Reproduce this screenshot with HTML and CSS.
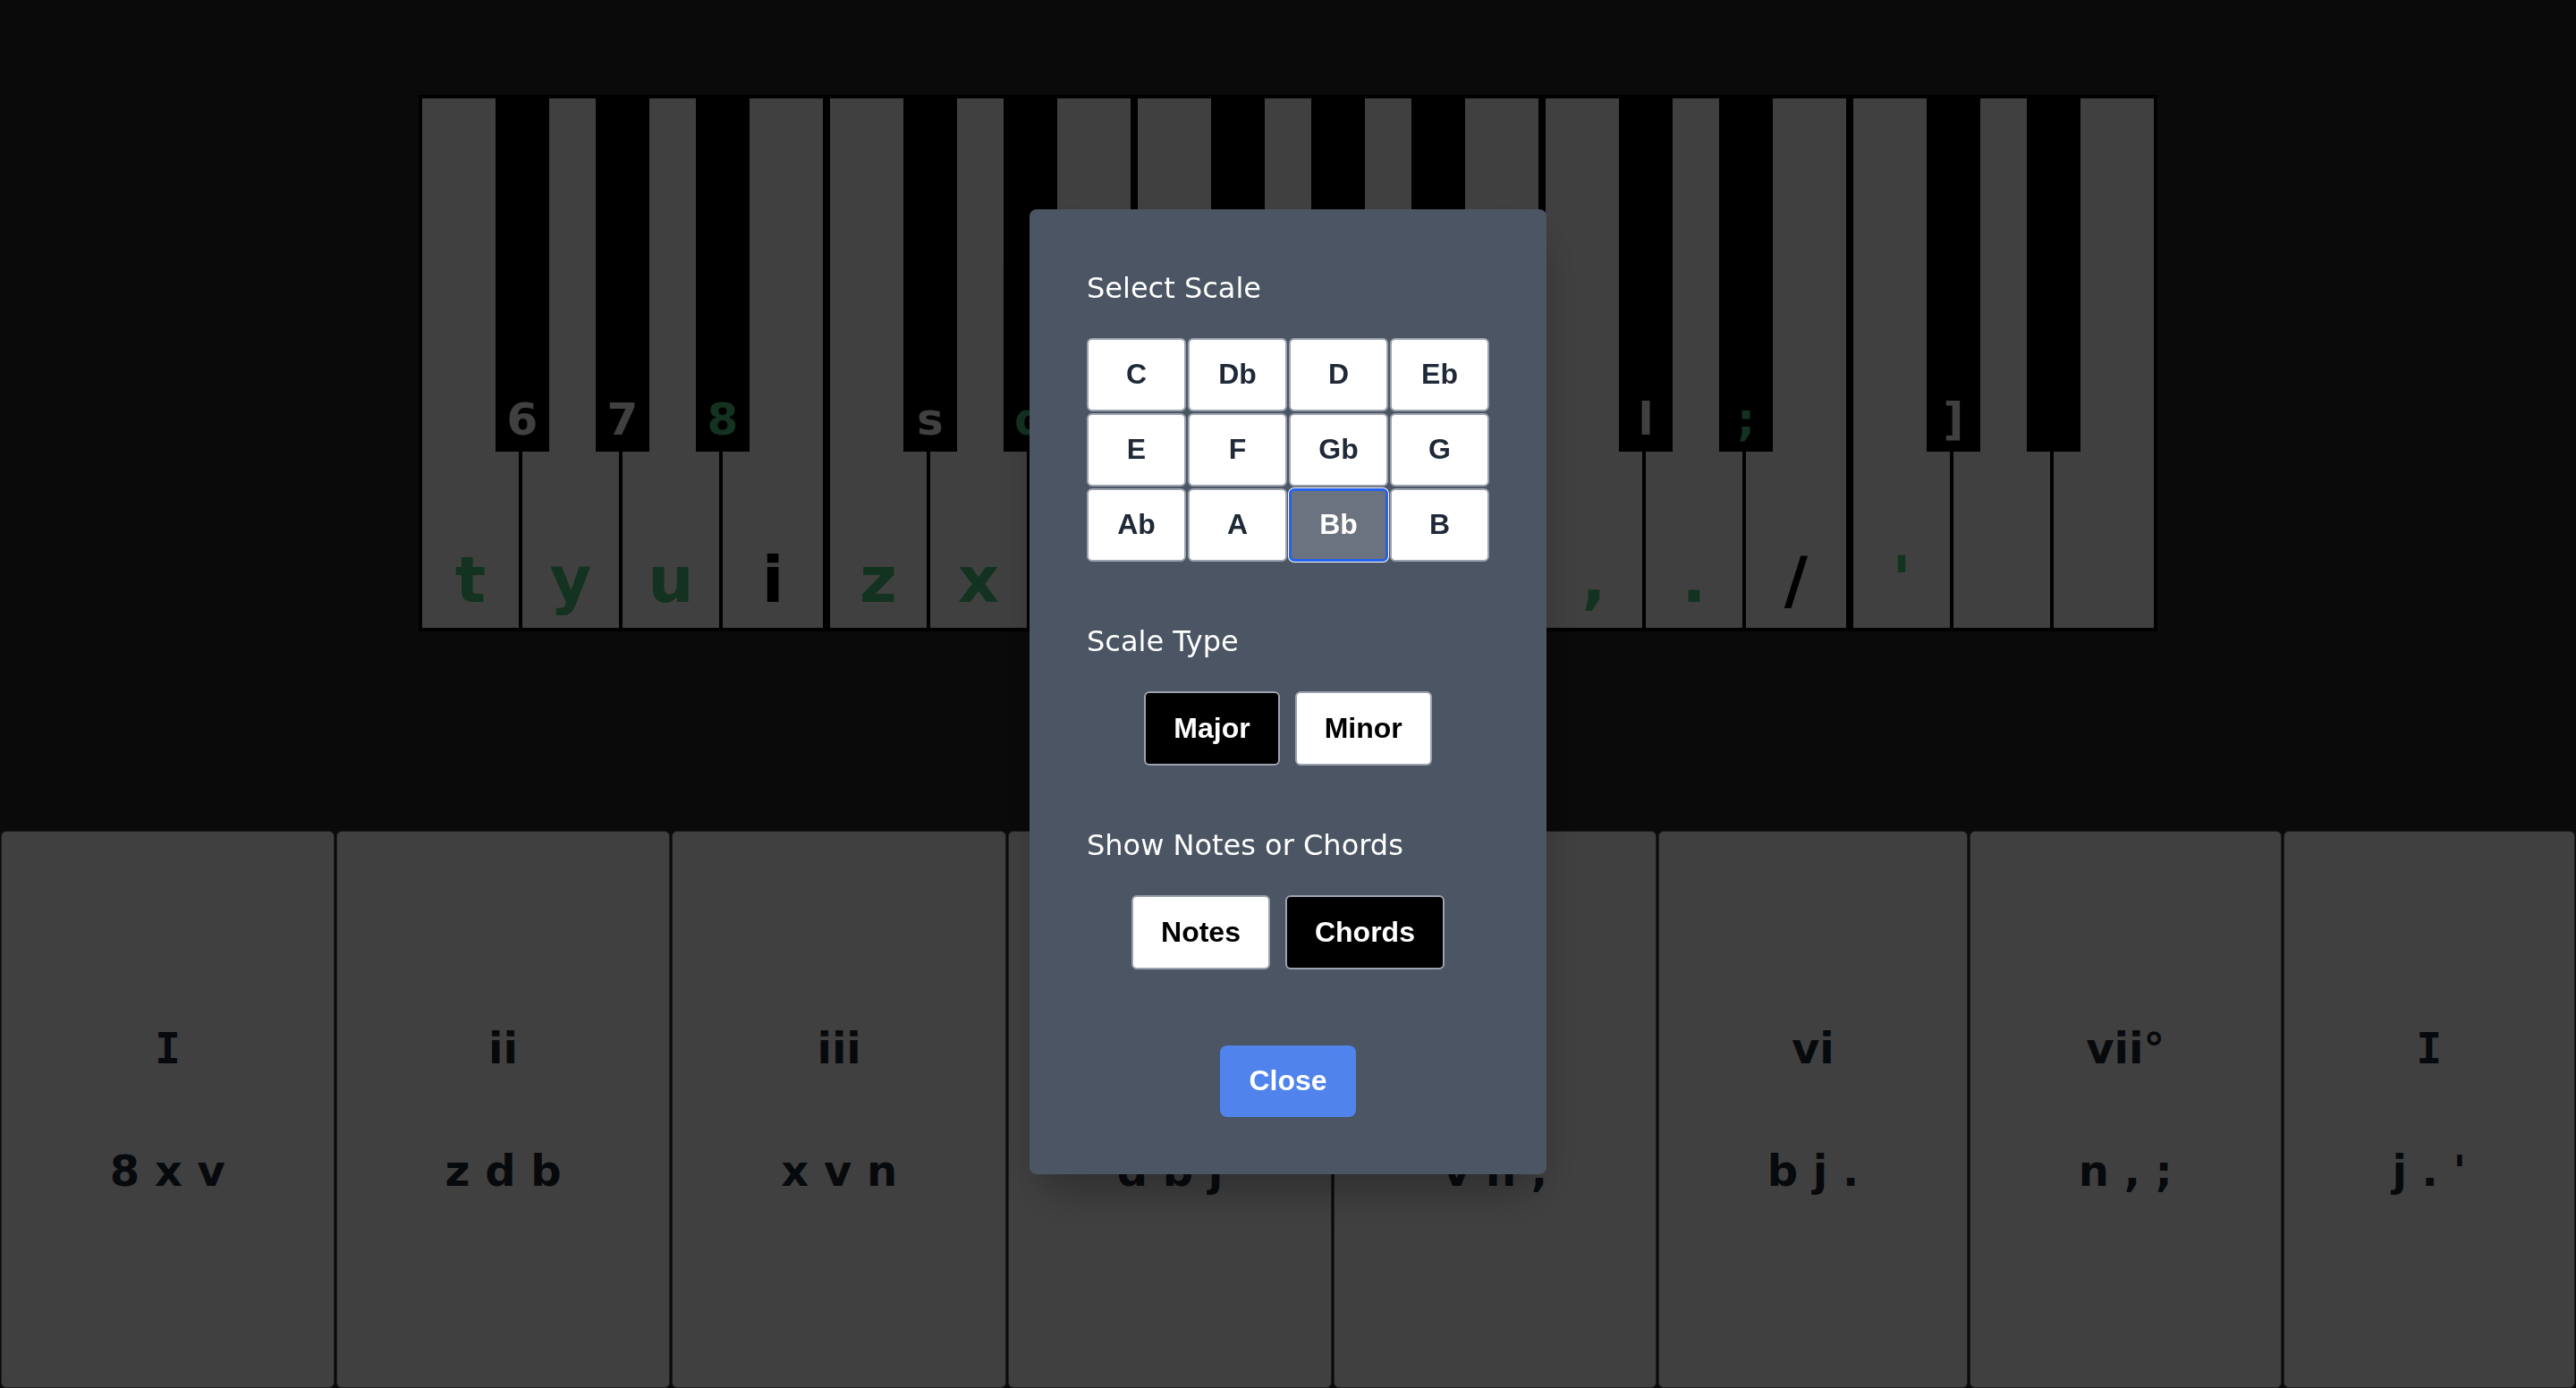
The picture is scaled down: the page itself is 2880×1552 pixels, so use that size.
FILE: index.html
```html
<!DOCTYPE html>
<html lang="en">
<head>
<meta charset="utf-8">
<title>Piano Chords</title>
<link rel="stylesheet" href="styles.css">
</head>
<body>
<div class="app">
  <div class="stage">
    <div class="piano">
      <div class="part">
        <div class="bkey p1"><span class="lbl w">6</span></div>
        <div class="bkey p2"><span class="lbl w">7</span></div>
        <div class="bkey p3"><span class="lbl g">8</span></div>
        <div class="wkey"><span class="lbl g">t</span></div>
        <div class="wkey"><span class="lbl g">y</span></div>
        <div class="wkey"><span class="lbl g">u</span></div>
        <div class="wkey"><span class="lbl k">i</span></div>
      </div>
      <div class="part">
        <div class="bkey p1"><span class="lbl w">s</span></div>
        <div class="bkey p2"><span class="lbl g">d</span></div>
        <div class="wkey"><span class="lbl g">z</span></div>
        <div class="wkey"><span class="lbl g">x</span></div>
        <div class="wkey"><span class="lbl k">c</span></div>
      </div>
      <div class="part">
        <div class="bkey p1"></div>
        <div class="bkey p2"></div>
        <div class="bkey p3"></div>
        <div class="wkey"><span class="lbl g">v</span></div>
        <div class="wkey"><span class="lbl g">b</span></div>
        <div class="wkey"><span class="lbl g">n</span></div>
        <div class="wkey"><span class="lbl k">m</span></div>
      </div>
      <div class="part">
        <div class="bkey p1"><span class="lbl w">l</span></div>
        <div class="bkey p2"><span class="lbl g">;</span></div>
        <div class="wkey"><span class="lbl g">,</span></div>
        <div class="wkey"><span class="lbl g">.</span></div>
        <div class="wkey"><span class="lbl k">/</span></div>
      </div>
      <div class="part">
        <div class="bkey p1"><span class="lbl w">]</span></div>
        <div class="bkey p2"></div>
        <div class="wkey"><span class="lbl g">'</span></div>
        <div class="wkey"></div>
        <div class="wkey"></div>
      </div>
    </div>
  </div>
  <div class="chords">
    <div class="chord"><div class="roman">I</div><div>8 x v</div></div>
    <div class="chord"><div>ii</div><div>z d b</div></div>
    <div class="chord"><div>iii</div><div>x v n</div></div>
    <div class="chord"><div>IV</div><div>d b j</div></div>
    <div class="chord"><div>V</div><div>v n ,</div></div>
    <div class="chord"><div>vi</div><div>b j .</div></div>
    <div class="chord"><div>vii°</div><div>n , ;</div></div>
    <div class="chord"><div class="roman">I</div><div>j . '</div></div>
  </div>
</div>

<div class="backdrop">
  <div class="modal">
    <div class="section">
      <h2 class="title">Select Scale</h2>
      <div class="grid">
        <button class="note">C</button>
        <button class="note">Db</button>
        <button class="note">D</button>
        <button class="note">Eb</button>
        <button class="note">E</button>
        <button class="note">F</button>
        <button class="note">Gb</button>
        <button class="note">G</button>
        <button class="note">Ab</button>
        <button class="note">A</button>
        <button class="note sel">Bb</button>
        <button class="note">B</button>
      </div>
    </div>
    <div class="section">
      <h2 class="title">Scale Type</h2>
      <div class="row">
        <button class="opt on">Major</button>
        <button class="opt">Minor</button>
      </div>
    </div>
    <div class="section">
      <h2 class="title">Show Notes or Chords</h2>
      <div class="row">
        <button class="opt">Notes</button>
        <button class="opt on">Chords</button>
      </div>
    </div>
    <div class="actions">
      <button class="close">Close</button>
    </div>
  </div>
</div>
</body>
</html>
```

FILE: styles.css
```css
html, body {
  margin: 0;
  height: 100%;
  overflow: hidden;
}

body {
  background: #282828;
  font-family: "DejaVu Sans", sans-serif;
}

.app {
  height: 100vh;
  display: flex;
  flex-direction: column;
}

.stage {
  height: 929px;
  flex: none;
  box-sizing: border-box;
  padding-top: 106px;
  display: flex;
  justify-content: center;
  align-items: flex-start;
}

.piano {
  display: flex;
  gap: 8px;
  padding: 4px;
  background: #000;
}

.part {
  position: relative;
  display: flex;
  height: 592px;
}

.wkey {
  box-sizing: border-box;
  width: 112px;
  height: 100%;
  background: #fff;
  border-right: 4px solid #000;
  display: flex;
  align-items: flex-end;
  justify-content: center;
  padding-bottom: 12px;
}

.wkey:last-child {
  border-right: 0;
}

.wkey .lbl {
  font: bold 72px "DejaVu Sans", sans-serif;
}

.bkey {
  position: absolute;
  top: 0;
  width: 60px;
  height: 395px;
  box-sizing: border-box;
  background: #000;
  display: flex;
  align-items: flex-end;
  justify-content: center;
  padding-bottom: 7px;
  z-index: 1;
}

.bkey .lbl {
  font: bold 50px "DejaVu Sans", sans-serif;
}

.p1 { left: 82px; }
.p2 { left: 194px; }
.p3 { left: 306px; }

.g { color: #50c880; }
.k { color: #000; }
.w { color: #fff; }

.chords {
  height: 623px;
  flex: none;
  display: flex;
  gap: 2px;
  padding: 0 1px;
}

.chord {
  flex: 1 1 auto;
  background: #fff;
  border: 1px solid #777;
  border-radius: 6px;
  display: flex;
  flex-direction: column;
  align-items: center;
  justify-content: center;
  gap: 81px;
  font: bold 48px "DejaVu Sans", sans-serif;
  color: #1f2937;
  white-space: pre;
}

.chord .roman {
  font-family: "DejaVu Sans Mono", monospace;
}

.backdrop {
  position: fixed;
  inset: 0;
  background: rgba(0, 0, 0, 0.75);
  display: flex;
  align-items: center;
  justify-content: center;
  padding-bottom: 6px;
  box-sizing: border-box;
  z-index: 10;
}

.modal {
  width: 450px;
  padding: 64px;
  background: #4b5563;
  border-radius: 8px;
  box-shadow: 0 25px 50px -12px rgba(0, 0, 0, 0.35);
}

.title {
  margin: 6px 0 37px;
  font: normal 32px/37px "DejaVu Sans", sans-serif;
  color: #fff;
}

.section + .section {
  margin-top: 71px;
}

.grid {
  display: grid;
  grid-template-columns: repeat(4, 1fr);
  grid-auto-rows: 82px;
  gap: 2px;
}

.note {
  margin: 0;
  padding: 0;
  font: bold 32px "Liberation Sans", Arial, sans-serif;
  color: #1f2937;
  background: #fff;
  border: 2px solid #9ca3af;
  border-radius: 6px;
  display: flex;
  align-items: center;
  justify-content: center;
}

.note.sel {
  background: #6b7280;
  color: #fff;
  border: 3px solid #2563eb;
  box-shadow: 0 0 0 1px #fff;
}

.row {
  display: flex;
  justify-content: center;
  gap: 17px;
}

.opt {
  box-sizing: border-box;
  height: 83px;
  margin: 0;
  padding: 0 31px;
  border: 2px solid #9ca3af;
  border-radius: 6px;
  background: #fff;
  color: #000;
  font: bold 32px "Liberation Sans", Arial, sans-serif;
}

.opt.on {
  background: #000;
  color: #fff;
}

.actions {
  margin-top: 85px;
  display: flex;
  justify-content: center;
}

.close {
  height: 80px;
  margin: 0;
  padding: 0 32px;
  border: 0;
  border-radius: 8px;
  background: #5083ec;
  color: #fff;
  font: bold 32px "Liberation Sans", Arial, sans-serif;
}
```
